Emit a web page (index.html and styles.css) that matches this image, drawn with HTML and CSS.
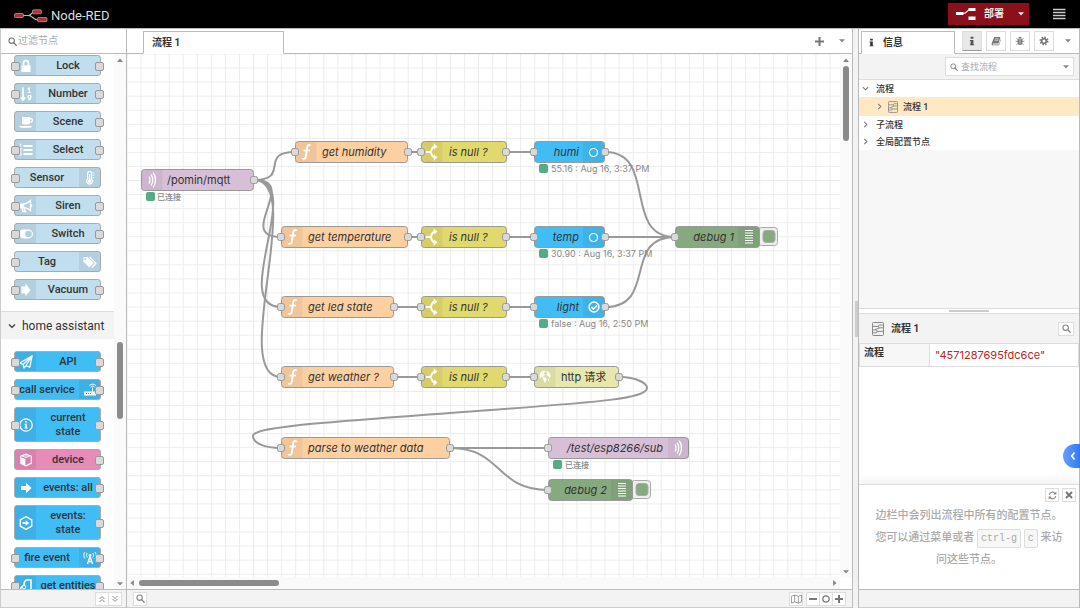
FILE: index.html
```html
<!DOCTYPE html>
<html lang="zh-CN">
<head>
<meta charset="utf-8">
<title>Node-RED</title>
<link rel="stylesheet" href="styles.css">
</head>
<body>
<svg class="defs" aria-hidden="true">
  <defs>
    <pattern id="grid" width="14.06" height="14.06" patternUnits="userSpaceOnUse" x="-0.5" y="-0.5">
      <path d="M0.5 0V14.06M0 0.5H14.06" stroke="#ececec" fill="none"/>
    </pattern>
    <symbol id="i-search" viewBox="0 0 16 16"><circle cx="6.5" cy="6.5" r="4.8" fill="none" stroke="currentColor" stroke-width="2"/><path d="M10 10l4.6 4.6" stroke="currentColor" stroke-width="2.4" stroke-linecap="round"/></symbol>
    <symbol id="i-caret" viewBox="0 0 8 5"><path d="M0 0h8L4 4.6z" fill="currentColor"/></symbol>
    <symbol id="i-info" viewBox="0 0 14 14"><path d="M5 1h4v3H5zM4 5.5h5v6h1V13H4v-1.500h1V7H4z" fill="currentColor"/></symbol>
    <symbol id="i-book" viewBox="0 0 14 14"><path d="M4.500 1.500h8.700L10.500 10.500H3c-1 0-1 1.300 0 1.300h8l2.500-7.600.3 1L11.300 13H2.800C1 13 .5 11.500 1 10z" fill="currentColor"/><path d="M5.700 4h5M5 6h5" stroke="#fff" stroke-width=".9"/></symbol>
    <symbol id="i-bug" viewBox="0 0 14 14"><path d="M4.500 3.500a2.500 2.500 0 0 1 5 0zM3.700 4.500h6.600v5a3.300 3.300 0 0 1-6.600 0z" fill="currentColor"/><path d="M1 7.500h12M2 3l2.500 2.500M12 3L9.500 5.500M2 12.500l2.500-2.500M12 12.500L9.500 10" stroke="currentColor" stroke-width="1.100"/><path d="M7 5.500V12" stroke="#fff" stroke-width=".8"/></symbol>
    <symbol id="i-cog" viewBox="0 0 14 14"><circle cx="7" cy="7" r="3.400" fill="none" stroke="currentColor" stroke-width="2.600"/><circle cx="7" cy="7" r="5.300" fill="none" stroke="currentColor" stroke-width="2" stroke-dasharray="2.080 2.080"/></symbol>
    <symbol id="i-chev" viewBox="0 0 8 8"><path d="M2.500 1l3 3-3 3" fill="none" stroke="currentColor" stroke-width="1.200"/></symbol>
    <symbol id="i-chev-down" viewBox="0 0 8 8"><path d="M1 2.500l3 3 3-3" fill="none" stroke="currentColor" stroke-width="1.200"/></symbol>
    <symbol id="i-dbl-up" viewBox="0 0 8 8"><path d="M1.500 4L4 1.500 6.500 4M1.500 7L4 4.500 6.500 7" fill="none" stroke="currentColor"/></symbol>
    <symbol id="i-dbl-down" viewBox="0 0 8 8"><path d="M1.500 1L4 3.500 6.500 1M1.500 4L4 6.500 6.500 4" fill="none" stroke="currentColor"/></symbol>
    <symbol id="i-flow" viewBox="0 0 12 14"><g fill="none" stroke="currentColor" stroke-width="1"><rect x=".5" y=".5" width="11" height="13" rx="1"/><rect x="6.500" y="3" width="5" height="2.800" rx="1"/><rect x=".5" y="8" width="4.500" height="2.800" rx="1"/><path d="M.5 4.400H6.500M5 9.400H11.500M3 7.800C4 6.500 6 7 7.500 6"/></g></symbol>
    <symbol id="i-map" viewBox="0 0 12 10"><path d="M.5 2L4 .7 8 2l3.500-1.300v7.600L8 9.500 4 8.200.5 9.500zM4 .7v7.500M8 2v7.500" fill="none" stroke="currentColor" stroke-width=".9"/></symbol>
    <symbol id="i-refresh" viewBox="0 0 14 14"><path d="M2 6a5 5 0 0 1 9-2M12 8a5 5 0 0 1-9 2" fill="none" stroke="currentColor" stroke-width="1.800"/><path d="M13 .8V5.500H8.300zM1 13.200V8.500h4.700z" fill="currentColor"/></symbol>

    <symbol id="n-lock" viewBox="0 0 14 14"><path d="M2.500 6.300h9V13h-9z" fill="#fff"/><path d="M4.500 6.500V4.200a2.500 2.500 0 0 1 5 0v2.300" fill="none" stroke="#fff" stroke-width="1.700"/></symbol>
    <symbol id="n-number" viewBox="0 0 14 14"><path d="M4 .5v12M1.800 10.500L4 13l2.200-2.500" fill="none" stroke="#fff" stroke-width="1.600"/><path d="M8.800 2l1.500-1v4.500M8.500 5.500h3.600M12 10a1.500 1.500 0 1 1 0-.5c0 2-.7 3.500-2.800 3.500" fill="none" stroke="#fff" stroke-width="1.200"/></symbol>
    <symbol id="n-cup" viewBox="0 0 14 14"><path d="M3 2h8v5.500c0 1.500-1 2-2 2H5c-1.300 0-2-.8-2-2zM.3 11h12.500c-.3 1.300-1 1.700-2 1.700H2.300C1.300 12.700.6 12.300.3 11z" fill="#fff"/><path d="M11 3.500h.6a1.800 1.800 0 0 1 0 3.600H11" fill="none" stroke="#fff" stroke-width="1.300"/></symbol>
    <symbol id="n-list" viewBox="0 0 14 14"><path d="M4.500 3h9M4.500 7h9M4.500 11h9" stroke="#fff" stroke-width="1.800"/><path d="M.7 1.500l1-.7v3M.5 5.700h2L.7 8h2M.5 10h2L1.500 11.200c1.500 0 1.300 2-.9 1.600" stroke="#fff" stroke-width=".9" fill="none"/></symbol>
    <symbol id="n-thermo" viewBox="0 0 14 14"><path d="M4.700 8V2.300a1.900 1.900 0 0 1 3.800 0V8a2.900 2.900 0 1 1-3.800 0z" fill="none" stroke="#fff" stroke-width="1.200"/><circle cx="6.600" cy="10.300" r="1.700" fill="#fff"/><path d="M6.600 3v7" stroke="#fff" stroke-width="1.300"/><path d="M9.500 2h1.700M9.500 4.300h1.700M9.500 6.600h1.700" stroke="#fff" stroke-width=".9"/></symbol>
    <symbol id="n-horn" viewBox="0 0 14 14"><path d="M.5 5.200C5 5.500 9 4 11.500 1.500v10C9.500 9.700 7.500 9 5.200 8.700c-.4 1.500.3 2.600 1.300 3.800H4C3.300 11.300 3 10 3.300 8.600H.5z" fill="none" stroke="#fff" stroke-width="1.300"/><path d="M.5 5h4.700v3.800H.5zM12 5.300h1.200v2.500H12z" fill="#fff"/></symbol>
    <symbol id="n-toggle" viewBox="0 0 14 14"><rect x="0" y="2.600" width="14" height="8.800" rx="4.400" fill="#fff"/><circle cx="9.500" cy="7" r="3.300" fill="#b4d0de"/></symbol>
    <symbol id="n-tags" viewBox="0 0 14 14"><path d="M.5 2h4l6 6-4.200 4.600L.5 6.500z" fill="#fff"/><path d="M6.500 2l6.300 6.200-4 4.400" fill="none" stroke="#fff" stroke-width="1.400"/><circle cx="2.400" cy="3.900" r=".9" fill="#b4d0de"/></symbol>
    <symbol id="n-arrow-big" viewBox="0 0 14 14"><path d="M2.500 3.500h4V.5l5 6.500-5 6.500v-3h-4z" fill="#fff"/></symbol>
    <symbol id="n-arrow" viewBox="0 0 14 14"><path d="M2 5h5V1.700L12.500 7 7 12.300V9H2z" fill="#fff"/></symbol>
    <symbol id="n-plane" viewBox="0 0 14 14"><path d="M13.200.8L.8 8l3.400 1.500L5 13.200l2-2.500 3.700 1.600zM4.200 9.500L13.200.8 7 10.700" fill="none" stroke="#fff" stroke-width="1.200" stroke-linejoin="round"/></symbol>
    <symbol id="n-router" viewBox="0 0 14 14"><path d="M1 8.500h12v4H1z" fill="#fff"/><path d="M9.500 8.500V4.500M6.300 2.500c1.500-1.800 5-1.800 6.500 0M7.600 4c1-1.100 2.900-1.100 3.900 0" fill="none" stroke="#fff"/><path d="M3 10.500h1M5 10.500h1M7 10.500h1" stroke="#3a9fd6"/></symbol>
    <symbol id="n-info" viewBox="0 0 14 14"><circle cx="7" cy="7" r="6.200" fill="none" stroke="#fff" stroke-width="1.300"/><path d="M6.200 3h1.700v1.600H6.200zM5.500 5.800h2.300v3.700h.8v1H5.500v-1h.8V6.800h-.8z" fill="#fff"/></symbol>
    <symbol id="n-cube" viewBox="0 0 14 14"><path d="M7 .6l5.800 2.200v8L7 13.500 1.200 10.800v-8z" fill="#fff"/><path d="M2.200 3.700L7 5.500l4.800-1.800M7 5.500V12" fill="none" stroke="#d77fac" stroke-width="1.200"/><path d="M7 6l4.700-1.700v5.500L7 12z" fill="#d77fac"/><path d="M7 1.600l3.600 1.400L7 4.400 3.400 3z" fill="#d77fac" opacity=".5"/></symbol>
    <symbol id="n-hex" viewBox="0 0 14 14"><path d="M7 .6l5.700 3.200v6.400L7 13.400 1.300 10.200V3.800z" fill="none" stroke="#fff" stroke-width="1.400"/><path d="M3.700 6h3V4.200L10.200 7 6.700 9.800V8h-3z" fill="#fff"/></symbol>
    <symbol id="n-tower" viewBox="0 0 14 14"><path d="M7 5L4.500 13M7 5l2.500 8M5.200 10.500h3.600" fill="none" stroke="#fff" stroke-width="1.300"/><circle cx="7" cy="4.300" r="1.300" fill="#fff"/><path d="M4.300 2c-1 1.200-1 3.300 0 4.500M9.700 2c1 1.200 1 3.300 0 4.500M2 1C.4 2.800.4 5.700 2 7.500M12 1c1.600 1.800 1.600 4.700 0 6.500" fill="none" stroke="#fff" stroke-width=".9"/></symbol>
    <symbol id="n-ent" viewBox="0 0 14 14"><path d="M5 6c0-3 1.500-5 3.500-5H12v12.500M1 13c0-3 1-5 3-6" fill="none" stroke="#fff" stroke-width="1.500"/><circle cx="5" cy="8" r="1.800" fill="none" stroke="#fff"/><circle cx="7" cy="12" r="1.300" fill="none" stroke="#fff"/></symbol>

    <g id="fn" fill="none" stroke="#fff"><path d="M15.500 5C15 3.600 12.700 3.500 12.300 6L10.800 16c-.4 2.400-2.800 2.400-3.300 1" stroke-width="1.900"/><path d="M8.500 9.500h6.500" stroke-width="1.700"/></g>
    <g id="sw" fill="none" stroke="#fff" stroke-width="1.900"><path d="M5 11H10M14 5.500C11 6 10.500 8.500 9.800 11C10.500 13.500 11 16 14 16.500"/><path d="M12.500 2.300L16.500 5.500l-3.500 3zM13 13.500l3.500 3-4 3.200z" fill="#fff" stroke="none"/></g>
    <g id="wave" fill="none" stroke="#fff" stroke-width="1.300"><path d="M8 7.500c1.200 2 1.200 5 0 7M10 5.500c2.300 3 2.300 8 0 11M12 3.500c3.300 4 3.300 11 0 15"/></g>
    <g id="bars" stroke="#fff" stroke-width="1.200"><path d="M7 4.500h8M7 7h8M7 9.500h8M7 12h8M7 14.500h8M7 17h8"/></g>
    <rect id="port" x="-3.500" y="7.500" width="7" height="7" rx="2" class="port"/>
    <path id="iconbg" d="M4 1H21.500V21H4a3 3 0 0 1-3-3V4a3 3 0 0 1 3-3z" fill="#000" fill-opacity=".05"/>
    <path id="iconbg-r" d="M0 1H18a3 3 0 0 1 3 3V18a3 3 0 0 1-3 3H0z" fill="#000" fill-opacity=".05"/>
  </defs>
</svg>

<header class="header">
  <div class="brand">
    <svg width="34" height="14" viewBox="0 0 34 14"><path d="M9 6.500h5c4 0 3-3.500 6-3.500M14 6.500c5 0 5 4.500 10 4.500" fill="none" stroke="#b8b8b8" stroke-width="1.200"/><g fill="#a93434" stroke="#d0a0a0" stroke-width=".7"><rect x=".5" y="4.500" width="9" height="4" rx="1"/><rect x="18.500" y=".8" width="9" height="4" rx="1"/><rect x="23.500" y="8.500" width="9.500" height="4.200" rx="1"/></g></svg>
    <span>Node-RED</span>
  </div>
  <div class="header-tools">
    <div class="deploy">
      <button class="deploy-main"><svg width="20" height="14" viewBox="0 0 20 14"><path d="M7 6.500c5 0 3-4 8-4" fill="none" stroke="#fff" stroke-width="1.200"/><path d="M0 5h7.500v3H0zM12.500 1h7v3h-7zM12.500 9.500h7v3.500h-7z" fill="#fff"/></svg><span>部署</span></button>
      <button class="deploy-menu" aria-label="部署选项"><svg width="6" height="4"><use href="#i-caret"/></svg></button>
    </div>
    <button class="menu" aria-label="菜单"><svg width="13" height="12" viewBox="0 0 13 12"><path d="M0 1.500h12.500M0 4.500h12.500M0 7.500h12.500M0 10.500h12.500" stroke="#ccc" stroke-width="1.500"/></svg></button>
  </div>
</header>

<main class="main">
  <aside class="palette">
    <label class="palette-search"><svg width="9" height="9"><use href="#i-search"/></svg><input type="text" placeholder="过滤节点" aria-label="过滤节点"></label>
    <div class="palette-body">
      <div class="palette-list">
        <div class="group">
          <div class="pn blue io"><span class="ic"><svg><use href="#n-lock"/></svg></span><span class="lb">Lock</span></div>
          <div class="pn blue io"><span class="ic"><svg><use href="#n-number"/></svg></span><span class="lb">Number</span></div>
          <div class="pn blue out"><span class="ic"><svg><use href="#n-cup"/></svg></span><span class="lb">Scene</span></div>
          <div class="pn blue io"><span class="ic"><svg><use href="#n-list"/></svg></span><span class="lb">Select</span></div>
          <div class="pn blue in rev"><span class="ic"><svg><use href="#n-thermo"/></svg></span><span class="lb">Sensor</span></div>
          <div class="pn blue io"><span class="ic"><svg><use href="#n-horn"/></svg></span><span class="lb">Siren</span></div>
          <div class="pn blue io"><span class="ic"><svg><use href="#n-toggle"/></svg></span><span class="lb">Switch</span></div>
          <div class="pn blue in rev"><span class="ic"><svg><use href="#n-tags"/></svg></span><span class="lb">Tag</span></div>
          <div class="pn blue io"><span class="ic"><svg><use href="#n-arrow-big"/></svg></span><span class="lb">Vacuum</span></div>
        </div>
        <button class="cat"><svg width="8" height="8"><use href="#i-chev-down"/></svg>home assistant</button>
        <div class="group ha">
          <div class="pn sky io"><span class="ic"><svg><use href="#n-plane"/></svg></span><span class="lb">API</span></div>
          <div class="pn sky io rev"><span class="ic"><svg><use href="#n-router"/></svg></span><span class="lb">call service</span></div>
          <div class="pn sky io tall"><span class="ic"><svg><use href="#n-info"/></svg></span><span class="lb">current<br>state</span></div>
          <div class="pn pink out"><span class="ic"><svg><use href="#n-cube"/></svg></span><span class="lb">device</span></div>
          <div class="pn sky out"><span class="ic"><svg><use href="#n-arrow"/></svg></span><span class="lb">events: all</span></div>
          <div class="pn sky out tall"><span class="ic"><svg><use href="#n-hex"/></svg></span><span class="lb">events:<br>state</span></div>
          <div class="pn sky io rev"><span class="ic"><svg><use href="#n-tower"/></svg></span><span class="lb">fire event</span></div>
          <div class="pn sky io"><span class="ic"><svg><use href="#n-ent"/></svg></span><span class="lb">get entities</span></div>
        </div>
      </div>
      <div class="vscroll"><svg class="up" width="6" height="4"><use href="#i-caret"/></svg><i class="sp-a"></i><i class="thumb"></i><i class="sp-b"></i><svg width="6" height="4"><use href="#i-caret"/></svg></div>
    </div>
    <div class="foot palette-foot">
      <button class="fb" aria-label="全部折叠"><svg width="8" height="8"><use href="#i-dbl-up"/></svg></button><button class="fb" aria-label="全部展开"><svg width="8" height="8"><use href="#i-dbl-down"/></svg></button>
    </div>
  </aside>

  <section class="workspace">
    <div class="tabs">
      <button class="tab">流程 1</button>
      <div class="tab-tools">
        <button class="plain" aria-label="添加流程"><svg width="9" height="9" viewBox="0 0 9 9"><path d="M4.500 0v9M0 4.500h9" stroke="#777" stroke-width="2"/></svg></button>
        <button class="plain" aria-label="流程列表"><svg width="6" height="4"><use href="#i-caret"/></svg></button>
      </div>
    </div>
    <div class="chart-area">
      <svg class="chart">
        <rect width="100%" height="100%" fill="url(#grid)"/>
        <g class="wires">
          <path d="M127 126C164 126 131 98 168 98"/>
          <path d="M127 126C174 126 107 183 154 183"/>
          <path d="M127 126C180 126 101 253 154 253"/>
          <path d="M127 126C180 126 101 323 154 323"/>
          <path d="M281 98H294M379 98H407M281 183H294M379 183H407M267 253H294M379 253H407M267 323H294M379 323H407"/>
          <path d="M478 98C531 98 495 183 548 183"/>
          <path d="M478 183H548"/>
          <path d="M478 253C531 253 495 183 548 183"/>
          <path d="M492 323C511 323 520 330 520 334C520 346 455 349 323 359C190 369 126 373 126 382C126 389 137 394 154 394"/>
          <path d="M323 394H421"/>
          <path d="M323 394C376 394 368 436 421 436"/>
        </g>
        <g transform="translate(14 115)"><rect class="nd" x=".5" y=".5" width="112" height="21" rx="3" fill="#d8bfd8"/><use href="#iconbg"/><use href="#wave"/><use href="#port" x="113"/><text class="lbl up" x="26" y="15">/pomin/mqtt</text><rect class="dot" x="5" y="23" width="9" height="9" rx="2"/><text class="st cn" x="16" y="31">已连接</text></g>
        <g transform="translate(168 87)"><rect class="nd" x=".5" y=".5" width="112" height="21" rx="3" fill="#fdd0a2"/><use href="#iconbg"/><use href="#fn"/><use href="#port"/><use href="#port" x="113"/><text class="lbl" x="27" y="15">get humidity</text></g>
        <g transform="translate(154 172)"><rect class="nd" x=".5" y=".5" width="126" height="21" rx="3" fill="#fdd0a2"/><use href="#iconbg"/><use href="#fn"/><use href="#port"/><use href="#port" x="127"/><text class="lbl" x="27" y="15">get temperature</text></g>
        <g transform="translate(154 242)"><rect class="nd" x=".5" y=".5" width="112" height="21" rx="3" fill="#fdd0a2"/><use href="#iconbg"/><use href="#fn"/><use href="#port"/><use href="#port" x="113"/><text class="lbl" x="27" y="15">get led state</text></g>
        <g transform="translate(154 312)"><rect class="nd" x=".5" y=".5" width="112" height="21" rx="3" fill="#fdd0a2"/><use href="#iconbg"/><use href="#fn"/><use href="#port"/><use href="#port" x="113"/><text class="lbl" x="27" y="15">get weather ?</text></g>
        <g transform="translate(154 383)"><rect class="nd" x=".5" y=".5" width="168" height="21" rx="3" fill="#fdd0a2"/><use href="#iconbg"/><use href="#fn"/><use href="#port"/><use href="#port" x="169"/><text class="lbl" x="27" y="15">parse to weather data</text></g>
        <g transform="translate(294 87)"><rect class="nd" x=".5" y=".5" width="85" height="21" rx="3" fill="#e2d96e"/><use href="#iconbg"/><use href="#sw"/><use href="#port"/><use href="#port" x="85"/><text class="lbl" x="28" y="15">is null ?</text></g>
        <g transform="translate(294 172)"><rect class="nd" x=".5" y=".5" width="85" height="21" rx="3" fill="#e2d96e"/><use href="#iconbg"/><use href="#sw"/><use href="#port"/><use href="#port" x="85"/><text class="lbl" x="28" y="15">is null ?</text></g>
        <g transform="translate(294 242)"><rect class="nd" x=".5" y=".5" width="85" height="21" rx="3" fill="#e2d96e"/><use href="#iconbg"/><use href="#sw"/><use href="#port"/><use href="#port" x="85"/><text class="lbl" x="28" y="15">is null ?</text></g>
        <g transform="translate(294 312)"><rect class="nd" x=".5" y=".5" width="85" height="21" rx="3" fill="#e2d96e"/><use href="#iconbg"/><use href="#sw"/><use href="#port"/><use href="#port" x="85"/><text class="lbl" x="28" y="15">is null ?</text></g>
        <g transform="translate(407 87)"><rect class="nd" x=".5" y=".5" width="70" height="21" rx="3" fill="#41bdf5"/><use href="#iconbg-r" x="49"/><circle cx="59.500" cy="11.500" r="4" fill="none" stroke="#fff" stroke-width="1.200"/><use href="#port"/><use href="#port" x="71"/><text class="lbl end" x="45" y="15">humi</text><rect class="dot" x="5" y="23" width="9" height="9" rx="2"/><text class="st" x="17" y="31">55.16 : Aug 16, 3:37 PM</text></g>
        <g transform="translate(407 172)"><rect class="nd" x=".5" y=".5" width="70" height="21" rx="3" fill="#41bdf5"/><use href="#iconbg-r" x="49"/><circle cx="59.500" cy="11.500" r="4" fill="none" stroke="#fff" stroke-width="1.200"/><use href="#port"/><use href="#port" x="71"/><text class="lbl end" x="45" y="15">temp</text><rect class="dot" x="5" y="23" width="9" height="9" rx="2"/><text class="st" x="17" y="31">30.90 : Aug 16, 3:37 PM</text></g>
        <g transform="translate(407 242)"><rect class="nd" x=".5" y=".5" width="70" height="21" rx="3" fill="#41bdf5"/><use href="#iconbg-r" x="49"/><circle cx="60" cy="11" r="4.900" fill="none" stroke="#fff" stroke-width="1.500"/><path d="M57.500 11l2 2 3.500-3.500" fill="none" stroke="#fff" stroke-width="1.700"/><use href="#port"/><use href="#port" x="71"/><text class="lbl end" x="45" y="15">light</text><rect class="dot" x="5" y="23" width="9" height="9" rx="2"/><text class="st" x="17" y="31">false : Aug 16, 2:50 PM</text></g>
        <g transform="translate(407 312)"><rect class="nd" x=".5" y=".5" width="84" height="21" rx="3" fill="#e7e7ae"/><use href="#iconbg"/><path d="M5.500 9C6 6.500 8 4.800 10.500 4.600L11 6 9.500 7.500l1.500.8-1 2-2 .2L7 12l-1-.8zM12 4.800c2.800.5 4.800 3 4.800 5.700l-1.300 1.500-1-1.800-1.500-.5-.3-2L14 7l-1.500-.8zM8.500 11l3 .5 1.300 1.500-1.500 3.500h-1L9.500 14zM14 13l1.500.5-1.500 1.700z" fill="#fff"/><use href="#port"/><use href="#port" x="85"/><text class="lbl up" x="27" y="15">http 请求</text></g>
        <g transform="translate(548 172)"><rect class="btn" x="83.500" y="1.500" width="19" height="18" rx="3"/><rect class="btn-in" x="88" y="4.500" width="12" height="12" rx="3"/><rect class="nd" x=".5" y=".5" width="84" height="21" rx="3" fill="#87a980"/><use href="#iconbg-r" x="63"/><use href="#bars" x="63"/><use href="#port"/><text class="lbl end" x="59" y="15">debug 1</text></g>
        <g transform="translate(421 425)"><rect class="btn" x="83.500" y="1.500" width="19" height="18" rx="3"/><rect class="btn-in" x="88" y="4.500" width="12" height="12" rx="3"/><rect class="nd" x=".5" y=".5" width="84" height="21" rx="3" fill="#87a980"/><use href="#iconbg-r" x="63"/><use href="#bars" x="63"/><use href="#port"/><text class="lbl end" x="59" y="15">debug 2</text></g>
        <g transform="translate(421 383)"><rect class="nd" x=".5" y=".5" width="140" height="21" rx="3" fill="#d8bfd8"/><use href="#iconbg-r" x="120"/><use href="#wave" x="119"/><use href="#port"/><text class="lbl end" x="115" y="15">/test/esp8266/sub</text><rect class="dot" x="5" y="23" width="9" height="9" rx="2"/><text class="st cn" x="17" y="31">已连接</text></g>
      </svg>
      <div class="vscroll chart-v"><svg class="up" width="6" height="4"><use href="#i-caret"/></svg><i class="thumb"></i><i class="sp-b"></i><svg width="6" height="4"><use href="#i-caret"/></svg></div>
      <div class="hscroll"><svg class="left" width="6" height="4"><use href="#i-caret"/></svg><i class="thumb"></i><i class="sp-b"></i><svg class="right" width="6" height="4"><use href="#i-caret"/></svg></div>
    </div>
    <div class="foot work-foot">
      <button class="fb" aria-label="搜索"><svg width="9" height="9"><use href="#i-search"/></svg></button>
      <span class="grow"></span>
      <button class="fb map" aria-label="导航图"><svg width="11" height="10"><use href="#i-map"/></svg></button>
      <button class="fb" aria-label="缩小"><svg width="8" height="8" viewBox="0 0 8 8"><path d="M0 4h8" stroke="#777" stroke-width="2"/></svg></button><button class="fb" aria-label="重置缩放"><svg width="8" height="8" viewBox="0 0 8 8"><circle cx="4" cy="4" r="3.200" fill="none" stroke="#777" stroke-width="1.200"/></svg></button><button class="fb" aria-label="放大"><svg width="8" height="8" viewBox="0 0 8 8"><path d="M0 4h8M4 0v8" stroke="#777" stroke-width="2"/></svg></button>
    </div>
  </section>

  <div class="separator"><i></i></div>

  <aside class="sidebar">
    <div class="side-tabs">
      <button class="side-tab"><svg width="9" height="9"><use href="#i-info"/></svg>信息</button>
      <div class="side-btns">
        <button class="sq on" aria-label="信息"><svg width="10" height="10"><use href="#i-info"/></svg></button>
        <button class="sq" aria-label="帮助"><svg width="10" height="10"><use href="#i-book"/></svg></button>
        <button class="sq" aria-label="调试"><svg width="10" height="10"><use href="#i-bug"/></svg></button>
        <button class="sq" aria-label="配置节点"><svg width="10" height="10"><use href="#i-cog"/></svg></button>
      </div>
      <button class="plain more" aria-label="更多"><svg width="6" height="4"><use href="#i-caret"/></svg></button>
    </div>
    <div class="side-search"><label class="find"><svg width="8" height="8"><use href="#i-search"/></svg><input type="text" placeholder="查找流程" aria-label="查找流程"><svg width="6" height="4"><use href="#i-caret"/></svg></label></div>
    <div class="outline">
      <div class="row"><svg width="7" height="7"><use href="#i-chev-down"/></svg>流程</div>
      <div class="row sub"><svg width="7" height="7"><use href="#i-chev"/></svg><svg class="fl" width="10" height="12"><use href="#i-flow"/></svg>流程 1</div>
      <div class="row"><svg width="7" height="7"><use href="#i-chev"/></svg>子流程</div>
      <div class="row"><svg width="7" height="7"><use href="#i-chev"/></svg>全局配置节点</div>
    </div>
    <div class="hsep"><i></i></div>
    <div class="details-head"><svg width="12" height="14"><use href="#i-flow"/></svg><span>流程 1</span><button class="fb" aria-label="定位"><svg width="9" height="9"><use href="#i-search"/></svg></button></div>
    <div class="details"><table><tr><th scope="row">流程</th><td>"4571287695fdc6ce"</td></tr></table></div>
    <div class="tips">
      <div class="tip-btns"><button class="fb" aria-label="刷新提示"><svg width="9" height="9"><use href="#i-refresh"/></svg></button><button class="fb" aria-label="关闭提示"><svg width="8" height="8" viewBox="0 0 8 8"><path d="M1 1l6 6M7 1L1 7" stroke="#777" stroke-width="2"/></svg></button></div>
      <p>边栏中会列出流程中所有的配置节点。您可以通过菜单或者 <kbd>ctrl-g</kbd> <kbd>c</kbd> 来访问这些节点。</p>
    </div>
    <div class="foot"></div>
  </aside>
</main>
<button class="float" aria-label="展开"><svg width="6" height="10" viewBox="0 0 6 10"><path d="M4.500 1.500L1.800 5l2.700 3.500" fill="none" stroke="#fff" stroke-width="1.700"/></svg></button>
</body>
</html>
```
FILE: styles.css
```css
* { box-sizing: border-box; }
html, body { height: 100%; }
body {
  margin: 0;
  display: flex;
  flex-direction: column;
  overflow: hidden;
  background: #f3f3f3;
  color: #444;
  font: 500 10px/14px Roboto, "Noto Sans CJK SC", sans-serif;
}
button, input { font: inherit; color: inherit; margin: 0; padding: 0; border: 0; background: none; }
button { display: flex; align-items: center; justify-content: center; }
svg { display: block; flex: none; }
.defs { position: absolute; width: 0; height: 0; }

/* header */
.header { height: 28px; flex: none; background: #000; display: flex; align-items: center; justify-content: space-between; padding: 0 14px; }
.brand { display: flex; align-items: center; gap: 3px; color: #ddd; font-size: 13px; font-weight: 400; padding-top: 3px; }
.header-tools { display: flex; align-items: center; gap: 24px; color: #eee; }
.deploy { display: flex; height: 22px; background: #8c101c; }
.deploy-main { gap: 8px; padding: 0 8px; font-weight: 700; }
.deploy-menu { width: 17px; }

/* frame */
.main { flex: 1; min-height: 0; display: flex; border-top: 1px solid #bbb; }
.foot { height: 19px; flex: none; display: flex; align-items: center; background: #f3f3f3; border-top: 1px solid #bbb; border-bottom: 1px solid #ccc; padding: 0 5px; }
.fb { width: 14px; height: 14px; background: #fff; border: 1px solid #ddd; color: #888; }
.grow { flex: 1; }
.plain { color: #888; }

/* scrollbars */
.vscroll { display: flex; flex-direction: column; align-items: center; width: 12px; padding: 4px 0 3px; background: #fafafa; color: #888; gap: 4px; }
.vscroll .up { transform: scaleY(-1); }
.thumb { background: #8b8b8b; border-radius: 3px; width: 6px; }
.hscroll { display: flex; align-items: center; height: 12px; padding: 0 2px; gap: 4px; background: #fafafa; color: #888; }
.hscroll .thumb { width: 140px; height: 6px; }
.hscroll .sp-b { flex: 1; }
.left { transform: rotate(90deg); }
.right { transform: rotate(-90deg); }

/* palette */
.palette { width: 127px; flex: none; display: flex; flex-direction: column; border-left: 1px solid #ccc; border-right: 1px solid #bbb; background: #fff; }
.palette-search { height: 25px; flex: none; display: flex; align-items: center; gap: 1px; padding: 0 7px; border-bottom: 1px solid #bbb; color: #777; }
.palette-search input { width: 90px; font-weight: 400; outline: 0; }
input::placeholder { color: #aaa; opacity: 1; }
.palette-body { flex: 1; min-height: 0; display: flex; }
.palette-list { flex: 1; min-width: 0; overflow: hidden; }
.palette-body .sp-a { flex: 7; }
.palette-body .thumb { height: 77px; }
.palette-body .sp-b { flex: 4; }
.palette-foot { justify-content: flex-end; padding: 0 4px; }
.palette-foot .fb + .fb, .work-foot .fb + .fb { margin-left: -1px; }
.group { display: flex; flex-direction: column; gap: 7px; padding: 1px 13px 11px; }
.ha { padding-top: 12px; }
.cat { width: 100%; height: 28px; justify-content: flex-start; gap: 6px; padding: 0 7px; background: #f3f3f3; border-top: 1px solid #ddd; font-size: 12px; font-weight: 400; color: #333; white-space: nowrap; }
.pn { position: relative; display: flex; flex: none; height: 21px; border: 1px solid #aaa; border-radius: 3px; color: #333; font-size: 11px; }
.tall { height: 35px; }
.pn.rev { flex-direction: row-reverse; }
.ic { width: 21px; display: flex; align-items: center; justify-content: center; background: rgba(0, 0, 0, .06); }
.ic svg { width: 14px; height: 14px; }
.lb { flex: 1; min-width: 0; display: flex; align-items: center; justify-content: center; text-align: center; white-space: nowrap; }
.io::before, .in::before, .io::after, .out::after {
  content: ""; position: absolute; top: calc(50% - 4px); width: 7px; height: 7px;
  background: #d9d9d9; border: 1px solid #999; border-radius: 2px;
}
.io::before, .in::before { left: -4px; }
.io::after, .out::after { right: -4px; }
.blue { background: #c0deed; }
.sky { background: #41bdf5; }
.pink { background: #e78bb8; }

/* workspace */
.workspace { flex: 1; min-width: 0; display: flex; flex-direction: column; background: #fff; border-right: 1px solid #bbb; }
.tabs { height: 25px; flex: none; display: flex; align-items: flex-end; justify-content: space-between; padding: 0 7px 0 16px; border-bottom: 1px solid #bbb; }
.tab { width: 141px; height: 23px; margin-bottom: -1px; justify-content: flex-start; padding: 0 8px; background: #fff; border: 1px solid #bbb; border-bottom-color: #fff; color: #333; font-weight: 700; }
.tab-tools { display: flex; align-items: center; gap: 15px; height: 24px; }
.chart-area { flex: 1; min-height: 0; display: grid; grid-template: 1fr 12px / 1fr 12px; }
.chart { width: 100%; height: 100%; overflow: hidden; min-height: 0; }
.chart-v .thumb { height: 75px; }
.chart-v .sp-b { flex: 1; }
.hscroll { grid-row: 2; }
.work-foot { padding: 0 6px; }
.work-foot .map { margin-right: 4px; }
.wires path { fill: none; stroke: #999; stroke-width: 2; }
.nd { stroke: #999; }
.port { fill: #d9d9d9; stroke: #999; }
.lbl { font-family: Inter, "Noto Sans CJK SC", sans-serif; font-size: 11px; font-style: italic; font-weight: 400; fill: #333; }
.lbl.up { font-style: normal; }
.end { text-anchor: end; }
.st { font-family: Inter, "Noto Sans CJK SC", sans-serif; font-size: 9px; font-weight: 400; fill: #888; }
.cn { font-size: 8px; font-weight: 500; }
.dot { fill: #5a8; }
.btn { fill: #eee; stroke: #aaa; }
.btn-in { fill: #87a980; stroke: #aaa; }

/* sidebar */
.separator { width: 5px; flex: none; display: flex; align-items: center; justify-content: flex-end; background: #f3f3f3; }
.separator i { width: 3px; height: 36px; background: #ccc; }
.sidebar { width: 222px; flex: none; display: flex; flex-direction: column; border-left: 1px solid #bbb; border-right: 1px solid #bbb; background: #fff; }
.side-tabs { height: 25px; flex: none; display: flex; align-items: center; padding: 0 8px 0 2px; border-bottom: 1px solid #bbb; }
.side-tab { width: 94px; height: 23px; align-self: flex-end; margin-bottom: -1px; justify-content: flex-start; gap: 7px; padding: 0 5px; background: #fff; border: 1px solid #bbb; border-bottom-color: #fff; font-weight: 700; color: #333; }
.side-btns { display: flex; gap: 4px; margin-left: 7px; }
.more { margin-left: auto; }
.sq { width: 20px; height: 20px; border: 1px solid #ddd; background: #fff; color: #777; }
.sq.on { background: #e8e8e8; border-bottom-color: #999; color: #555; }
.side-search { height: 26px; flex: none; display: flex; align-items: center; justify-content: flex-end; padding: 0 5px; background: #f3f3f3; border-bottom: 1px solid #ddd; }
.find { display: flex; align-items: center; gap: 3px; width: 129px; height: 19px; padding: 0 4px; background: #fff; border: 1px solid #ddd; color: #888; }
.find input { flex: 1; min-width: 0; font-size: 9px; font-weight: 400; outline: 0; }
.outline { flex: 1; background: #f7f7f7; font-size: 9px; color: #333; }
.row { display: flex; align-items: center; gap: 7px; height: 17px; padding: 0 3px; background: #fff; }
.row svg { color: #777; }
.sub { height: 19px; gap: 5px; padding-left: 17px; background: #ffe9c5; }
.sub .fl { color: #888; }
.hsep { height: 6px; flex: none; display: flex; align-items: center; justify-content: center; border: solid #ddd; border-width: 1px 0; }
.hsep i { width: 40px; height: 2px; background: #ccc; }
.details-head { height: 29px; flex: none; display: flex; align-items: center; gap: 7px; padding: 0 5px 0 13px; background: #f3f3f3; font-weight: 700; color: #333; }
.details-head svg { color: #888; }
.details-head span { flex: 1; }
.details-head .fb { width: 16px; }
.details { height: 141px; flex: none; }
table { width: 100%; border-collapse: collapse; }
th, td { height: 23px; border: 1px solid #ddd; padding: 0 5px; text-align: left; }
th { width: 70px; padding: 0 4px 5px; background: #f7f7f7; font-weight: 700; color: #333; }
td { font-family: Inter, sans-serif; font-size: 11px; font-weight: 400; color: #b72828; }
.tips { height: 105px; flex: none; border-top: 1px solid #ddd; box-shadow: 0 -4px 8px rgba(0, 0, 0, .06); padding: 3px; color: #aaa; }
.tip-btns { display: flex; justify-content: flex-end; gap: 3px; }
.tips p { margin: 3px 9px; font-size: 11px; line-height: 22px; text-align: center; }
kbd { font: 10px/14px "Liberation Mono", monospace; background: #f7f7f7; border: 1px solid #ddd; border-radius: 2px; padding: 3px; }

.float { position: fixed; right: 0; top: 444px; width: 17px; height: 24px; border-radius: 12px 0 0 12px; background: linear-gradient(90deg, #67a0fb, #2f7bf6); padding-left: 3px; }
```
